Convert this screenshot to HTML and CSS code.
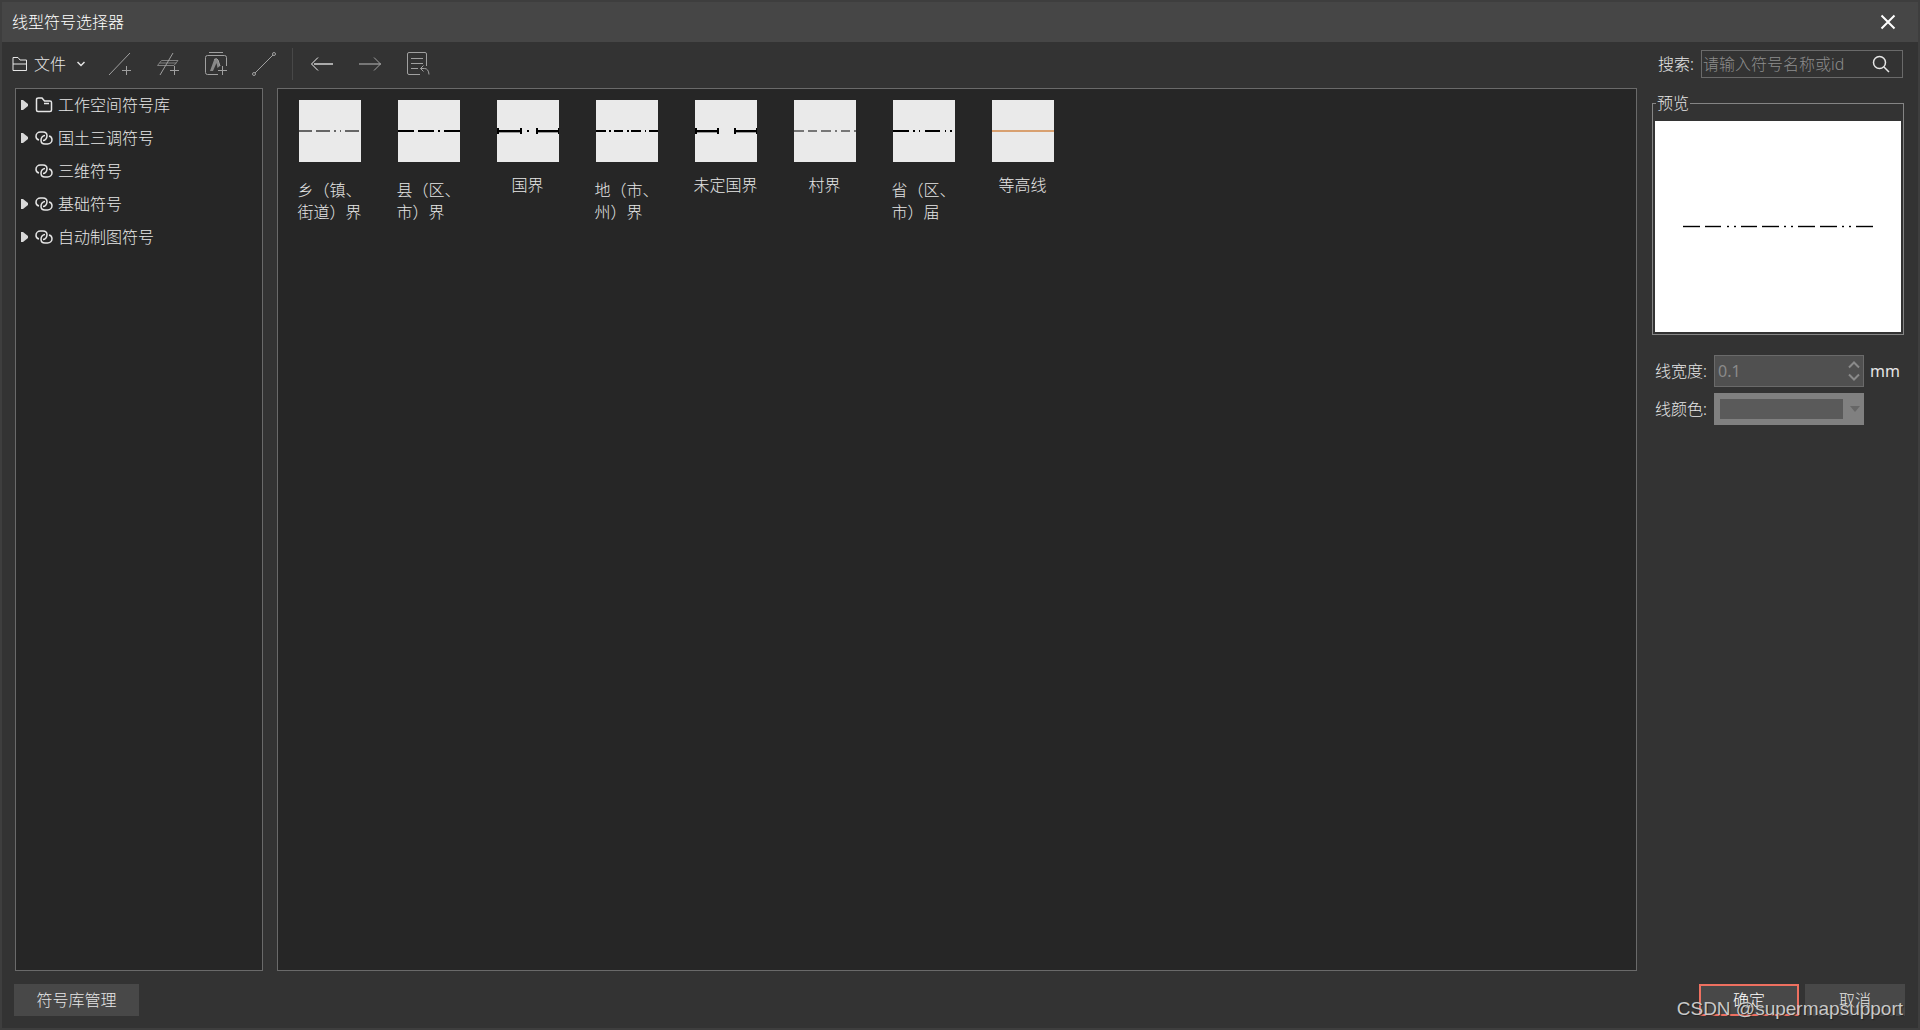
FILE: index.html
```html
<!DOCTYPE html>
<html lang="zh-CN">
<head>
<meta charset="utf-8">
<title>线型符号选择器</title>
<meta name="viewport" content="width=device-width, initial-scale=1">
<link rel="stylesheet" href="styles.css">
</head>
<body>
<svg class="defs" aria-hidden="true">
  <symbol id="i-link" viewBox="0 0 18 14"><path d="M4 9C2 8.500 1 7 1 5.200 1 2.800 3 1 5.500 1H8c2.500 0 4 1.800 4 3.800C12 7.500 10 9.500 8 9.500M14 5c2 .5 3 2 3 3.800 0 2.400-2 4.200-4.500 4.200H10c-2.500 0-4-1.800-4-3.800C6 6.500 8 4.500 10 4.500"/></symbol>
  <symbol id="i-tri" viewBox="0 0 8 12"><path d="M0 1h2l5 4v2l-5 4H0z"/></symbol>
</svg>
<div class="window">
  <header class="titlebar">
    <h1>线型符号选择器</h1>
    <button class="close" aria-label="关闭"><svg width="16" height="16" viewBox="0 0 16 16"><path d="M1.500 1.500l13 13M14.500 1.500l-13 13"/></svg></button>
  </header>

  <div class="toolbar">
    <button class="file">
      <svg width="16" height="16" viewBox="0 0 16 16"><path d="M1 14.500V1.500h5l2 2.500h6.500v10.500zM1 8h13.500"/></svg>
      <span>文件</span>
      <svg class="chev" width="8" height="6" viewBox="0 0 8 6"><path d="M.5 1L4 4.500 7.500 1"/></svg>
    </button>
    <button class="tool" aria-label="新建二维线型符号"><svg width="24" height="24" viewBox="0 0 24 24"><path d="M1 23L22 1M18.500 14v9M14 18.500h9"/></svg></button>
    <button class="tool" aria-label="新建三维线型符号"><svg width="24" height="24" viewBox="0 0 24 24"><path class="plane" d="M5.500 8.500H22l-4 5H1.500zM3.500 11h17"/><path d="M4 23L17 1M18.500 14v9M14 18.500h9"/></svg></button>
    <button class="tool" aria-label="导入符号"><svg width="24" height="24" viewBox="0 0 24 24"><path d="M5 .5h14M14 22.500H3.500q-2 0-2-2v-15q0-2 2-2h17q2 0 2 2V14M18.500 14v9M14 18.500h9"/><path class="shade" d="M6 19l4-11q2-2.500 4 0l2 6-2.500 2-1-5L9 19z"/><path d="M10 7.500q3-2 4 .5l2 6"/></svg></button>
    <button class="tool" aria-label="编辑线型"><svg width="24" height="24" viewBox="0 0 24 24"><path d="M3 21L21 3"/><circle cx="2" cy="22" r="1.500"/><circle cx="22" cy="2" r="1.500"/></svg></button>
    <span class="sep"></span>
    <button class="tool back" aria-label="后退"><svg width="24" height="24" viewBox="0 0 24 24"><path class="dim" d="M4 12h19"/><path d="M8 5.500L1.500 12 8 18.500"/></svg></button>
    <button class="tool" aria-label="前进"><svg width="24" height="24" viewBox="0 0 24 24"><path class="thin" d="M1 12h22"/><path d="M16 5.500l6.500 6.500-6.500 6.500"/></svg></button>
    <button class="tool" aria-label="还原"><svg width="24" height="24" viewBox="0 0 24 24"><path d="M14 22.500H3q-1.500 0-1.500-1.500V2Q1.500 .5 3 .5h16q1.500 0 1.500 1.500V14M5 6.500h12M5 11.500h12M5 16.500h7M17.500 13.500L14.500 16.500l3 3M14.500 16.500h4q4 0 4.500 6"/></svg></button>
    <div class="search">
      <label for="q">搜索:</label>
      <div class="searchbox">
        <input id="q" type="text" placeholder="请输入符号名称或id">
        <button aria-label="搜索"><svg width="18" height="18" viewBox="0 0 18 18"><circle cx="7.500" cy="7.500" r="6"/><path d="M12 12l5 5"/></svg></button>
      </div>
    </div>
  </div>

  <div class="content">
    <nav class="panel tree" aria-label="符号库">
      <ul>
        <li><button aria-label="展开"><svg width="8" height="12"><use href="#i-tri"/></svg></button><svg class="ico" width="18" height="16" viewBox="0 0 18 16"><path d="M3.500 1H7l2.500 3H15q1.500 0 1.500 1.500V13q0 1.500-1.500 1.500H3Q1.500 14.500 1.500 13V2.500Q1.500 1 3.500 1zM9 6.500h5"/></svg><span>工作空间符号库</span></li>
        <li><button aria-label="展开"><svg width="8" height="12"><use href="#i-tri"/></svg></button><svg class="ico" width="18" height="14"><use href="#i-link"/></svg><span>国土三调符号</span></li>
        <li class="leaf"><svg class="ico" width="18" height="14"><use href="#i-link"/></svg><span>三维符号</span></li>
        <li><button aria-label="展开"><svg width="8" height="12"><use href="#i-tri"/></svg></button><svg class="ico" width="18" height="14"><use href="#i-link"/></svg><span>基础符号</span></li>
        <li><button aria-label="展开"><svg width="8" height="12"><use href="#i-tri"/></svg></button><svg class="ico" width="18" height="14"><use href="#i-link"/></svg><span>自动制图符号</span></li>
      </ul>
    </nav>

    <main class="panel symbols">
      <figure class="long"><svg viewBox="0 0 62 62"><path stroke="#666" d="M0 31h13M17 31h14M35 31h2M41 31h1M46 31h14"/></svg><figcaption>乡（镇、街道）界</figcaption></figure>
      <figure class="long"><svg viewBox="0 0 62 62"><path d="M0 31h16M20 31h16M40 31h2M46 31h16"/></svg><figcaption>县（区、市）界</figcaption></figure>
      <figure><svg viewBox="0 0 62 62"><path class="fringe" d="M0 32.500h24M39 32.500h23"/><path d="M0 31h24M30 31h2M39 31h23M1 28v6M24 28v6M40 28v6M62 28v6"/></svg><figcaption>国界</figcaption></figure>
      <figure class="long"><svg viewBox="0 0 62 62"><path d="M0 31h10M13 31h2M18 31h9M31 31h2M35 31h10M49 31h1M53 31h9"/></svg><figcaption>地（市、州）界</figcaption></figure>
      <figure><svg viewBox="0 0 62 62"><path class="fringe" d="M0 32.500h24M39 32.500h23"/><path d="M0 31h24M39 31h23M1 28v6M23 28v6M40 28v6M62 28v6"/></svg><figcaption>未定国界</figcaption></figure>
      <figure><svg viewBox="0 0 62 62"><path stroke="#777" d="M0 31h10M14 31h9M27 31h10M41 31h2M47 31h9M60 31h2"/></svg><figcaption>村界</figcaption></figure>
      <figure class="long"><svg viewBox="0 0 62 62"><path d="M0 31h16M20 31h2M26 31h1M32 31h15M52 31h1M57 31h2"/></svg><figcaption>省（区、市）届</figcaption></figure>
      <figure><svg viewBox="0 0 62 62"><path stroke="#d8a070" d="M0 31h62"/></svg><figcaption>等高线</figcaption></figure>
    </main>

    <aside class="side">
      <fieldset>
        <legend>预览</legend>
        <svg class="preview" viewBox="0 0 246 211"><path class="halo" d="M28 105.500h17M50 105.500h16M72 105.500h2M79 105.500h2M86 105.500h16M107 105.500h17M129 105.500h2M136 105.500h2M143 105.500h17M165 105.500h17M187 105.500h2M194 105.500h2M201 105.500h17"/><path d="M28 105.500h17M50 105.500h16M72 105.500h2M79 105.500h2M86 105.500h16M107 105.500h17M129 105.500h2M136 105.500h2M143 105.500h17M165 105.500h17M187 105.500h2M194 105.500h2M201 105.500h17"/></svg>
      </fieldset>
      <div class="form">
        <label for="w">线宽度:</label>
        <div class="control"><input id="w" type="text" value="0.1" disabled><svg width="12" height="20" viewBox="0 0 12 20"><path d="M1 6.500L6 1.500l5 5M1 13.500l5 5 5-5"/></svg></div>
        <span class="unit">mm</span>
        <label for="c">线颜色:</label>
        <div class="control color"><select id="c" disabled></select><svg width="10" height="6" viewBox="0 0 10 6"><path d="M0 0h10L5 6z"/></svg></div>
      </div>
    </aside>
  </div>

  <footer class="footer">
    <button class="btn manage">符号库管理</button>
    <button class="btn ok">确定</button>
    <button class="btn">取消</button>
  </footer>
  <div class="watermark">CSDN @supermapsupport</div>
</div>
</body>
</html>
```
FILE: styles.css
```css
* { box-sizing: border-box; }
body {
  margin: 0;
  background: #333;
  color: #e6e6e6;
  font: 300 16px/22px "Noto Sans", "Noto Sans CJK SC", sans-serif;
}
button, input, select { font: inherit; color: inherit; margin: 0; }
button { border: 0; padding: 0; background: none; }
svg { display: block; flex: none; fill: none; stroke: currentColor; }
.defs { position: absolute; width: 0; height: 0; }

.window {
  position: relative;
  display: flex;
  flex-direction: column;
  min-height: 100vh;
  border: 2px solid #3e3e3e;
}

.titlebar {
  display: flex;
  align-items: center;
  justify-content: space-between;
  height: 40px;
  padding: 0 22px 0 10px;
  background: #464646;
  color: #fff;
}
.titlebar h1 { margin: 0; font-size: 16px; font-weight: 300; }
.close svg { stroke-width: 2; }

.toolbar { display: flex; align-items: center; height: 46px; padding: 0 15px 2px 10px; }
.file { display: flex; align-items: center; gap: 6px; width: 84px; }
.chev { margin-left: 5px; stroke-width: 1.5; }
.tool { display: flex; justify-content: center; width: 48px; color: #a0a0a0; }
.tool .shade { fill: #888; stroke: none; }
.tool .plane { stroke: #808080; }
.tool.back { color: #f0f0f0; }
.tool .dim { stroke: #aaa; stroke-width: 2; }
.tool .thin { stroke: #777; stroke-width: 2; }
.sep { width: 1px; height: 32px; margin: 0 5px 0 4px; background: #484848; }
.search { display: flex; align-items: center; gap: 7px; margin-left: auto; }
.searchbox { display: flex; align-items: center; width: 202px; height: 28px; border: 1px solid #6a6a6a; }
.searchbox input { flex: 1; min-width: 0; padding: 0 1px; border: 0; background: none; }
.searchbox input::placeholder { color: #8c8c8c; opacity: 1; }
.searchbox button { padding-right: 12px; }
.searchbox svg { stroke-width: 1.5; }

.content { flex: 1; display: flex; padding-left: 13px; padding-right: 14px; }
.panel { border: 1px solid #6a6a6a; background: #262626; }
.tree { width: 248px; margin-right: 14px; }
.tree ul { list-style: none; margin: 0; padding: 0; }
.tree li { display: flex; align-items: center; height: 33px; padding: 0 0 1px 5px; }
.tree li.leaf { padding-left: 19px; }
.tree li button { width: 14px; color: #d8d8d8; }
.tree li button svg { fill: currentColor; stroke: none; }
.ico { margin-right: 5px; stroke-width: 1.5; }

.symbols {
  flex: 1;
  display: grid;
  grid-template-columns: repeat(auto-fill, 99px);
  align-content: start;
  padding: 11px 2px;
}
figure { display: flex; flex-direction: column; align-items: center; gap: 12px; margin: 0; }
figure.long { gap: 17px; }
figure svg { width: 62px; height: 62px; background: #eaeaea; stroke: #000; stroke-width: 2; }
figure .fringe { stroke: #999; stroke-width: 1; }
figcaption { max-width: 64px; }

.side { width: 252px; margin-left: 15px; padding-top: 4px; }
fieldset { margin: 0; padding: 7px 2px 2px; border: 1px solid #858585; }
legend { margin-left: 1px; padding: 0 1px; }
.preview { width: 100%; background: #fff; stroke: #000; }
.preview .halo { stroke: #ccc; stroke-width: 3; }
.form {
  display: grid;
  grid-template-columns: 53px 150px auto;
  column-gap: 6px;
  row-gap: 6px;
  align-items: center;
  padding-left: 3px;
  margin-top: 20px;
}
.unit, .control input { font-weight: 400; }
.control { display: flex; align-items: center; height: 32px; border: 1px solid #6a6a6a; background: #505050; color: #8a8a8a; }
.control input { flex: 1; min-width: 0; padding: 0 3px; border: 0; background: none; }
.control svg { margin-right: 3px; stroke-width: 2; }
.control.color { padding: 6px; border: 0; background: #808080; }
.color select { flex: 1; height: 20px; border: 0; background: #5a5a5a; appearance: none; opacity: 1; }
.color svg { margin: 0 -2px 0 7px; fill: #666; stroke: none; }

.footer { display: flex; gap: 6px; padding: 13px 13px 12px 12px; }
.btn { width: 100px; height: 32px; background: #484848; }
.btn.manage { width: 125px; margin-right: auto; }
.btn.ok { border: 2px solid #ee7060; color: #fff; }

.watermark {
  position: absolute;
  right: 15px;
  bottom: 6px;
  color: #c8c8c8;
  font: 400 19px/26px "Liberation Sans", sans-serif;
  text-shadow: 1px 1px 1px #222;
  pointer-events: none;
}
```
